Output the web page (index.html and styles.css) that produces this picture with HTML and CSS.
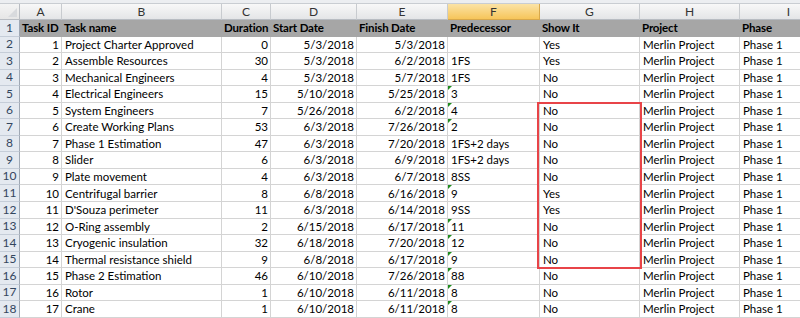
FILE: index.html
```html
<!DOCTYPE html>
<html>
<head>
<meta charset="utf-8">
<link rel="stylesheet" href="styles.css">
</head>
<body>
<div class="sheet">
  <div class="topline"></div>
  <div class="row colhdr">
    <div class="corner"><span class="corner-tri"></span></div>
    <div class="ch">A</div><div class="ch">B</div><div class="ch">C</div><div class="ch">D</div><div class="ch">E</div><div class="ch sel">F</div><div class="ch">G</div><div class="ch">H</div><div class="ch">I</div>
  </div>
  <div class="row head">
    <div class="rh">1</div>
    <div class="c">Task ID</div><div class="c">Task name</div><div class="c">Duration</div><div class="c">Start Date</div><div class="c">Finish Date</div><div class="c">Predecessor</div><div class="c">Show It</div><div class="c">Project</div><div class="c">Phase</div>
  </div>
  <div class="row"><div class="rh">2</div><div class="c r">1</div><div class="c">Project Charter Approved</div><div class="c r">0</div><div class="c r">5/3/2018</div><div class="c r">5/3/2018</div><div class="c"></div><div class="c">Yes</div><div class="c">Merlin Project</div><div class="c">Phase 1</div></div>
  <div class="row"><div class="rh">3</div><div class="c r">2</div><div class="c">Assemble Resources</div><div class="c r">30</div><div class="c r">5/3/2018</div><div class="c r">6/2/2018</div><div class="c">1FS</div><div class="c">Yes</div><div class="c">Merlin Project</div><div class="c">Phase 1</div></div>
  <div class="row"><div class="rh">4</div><div class="c r">3</div><div class="c">Mechanical Engineers</div><div class="c r">4</div><div class="c r">5/3/2018</div><div class="c r">5/7/2018</div><div class="c">1FS</div><div class="c">No</div><div class="c">Merlin Project</div><div class="c">Phase 1</div></div>
  <div class="row"><div class="rh">5</div><div class="c r">4</div><div class="c">Electrical Engineers</div><div class="c r">15</div><div class="c r">5/10/2018</div><div class="c r">5/25/2018</div><div class="c t">3</div><div class="c">No</div><div class="c">Merlin Project</div><div class="c">Phase 1</div></div>
  <div class="row"><div class="rh">6</div><div class="c r">5</div><div class="c">System Engineers</div><div class="c r">7</div><div class="c r">5/26/2018</div><div class="c r">6/2/2018</div><div class="c t">4</div><div class="c">No</div><div class="c">Merlin Project</div><div class="c">Phase 1</div></div>
  <div class="row"><div class="rh">7</div><div class="c r">6</div><div class="c">Create Working Plans</div><div class="c r">53</div><div class="c r">6/3/2018</div><div class="c r">7/26/2018</div><div class="c t">2</div><div class="c">No</div><div class="c">Merlin Project</div><div class="c">Phase 1</div></div>
  <div class="row"><div class="rh">8</div><div class="c r">7</div><div class="c">Phase 1 Estimation</div><div class="c r">47</div><div class="c r">6/3/2018</div><div class="c r">7/20/2018</div><div class="c">1FS+2 days</div><div class="c">No</div><div class="c">Merlin Project</div><div class="c">Phase 1</div></div>
  <div class="row"><div class="rh">9</div><div class="c r">8</div><div class="c">Slider</div><div class="c r">6</div><div class="c r">6/3/2018</div><div class="c r">6/9/2018</div><div class="c">1FS+2 days</div><div class="c">No</div><div class="c">Merlin Project</div><div class="c">Phase 1</div></div>
  <div class="row"><div class="rh">10</div><div class="c r">9</div><div class="c">Plate movement</div><div class="c r">4</div><div class="c r">6/3/2018</div><div class="c r">6/7/2018</div><div class="c">8SS</div><div class="c">No</div><div class="c">Merlin Project</div><div class="c">Phase 1</div></div>
  <div class="row"><div class="rh">11</div><div class="c r">10</div><div class="c">Centrifugal barrier</div><div class="c r">8</div><div class="c r">6/8/2018</div><div class="c r">6/16/2018</div><div class="c t">9</div><div class="c">Yes</div><div class="c">Merlin Project</div><div class="c">Phase 1</div></div>
  <div class="row"><div class="rh">12</div><div class="c r">11</div><div class="c">D'Souza perimeter</div><div class="c r">11</div><div class="c r">6/3/2018</div><div class="c r">6/14/2018</div><div class="c">9SS</div><div class="c">Yes</div><div class="c">Merlin Project</div><div class="c">Phase 1</div></div>
  <div class="row"><div class="rh">13</div><div class="c r">12</div><div class="c">O-Ring assembly</div><div class="c r">2</div><div class="c r">6/15/2018</div><div class="c r">6/17/2018</div><div class="c t">11</div><div class="c">No</div><div class="c">Merlin Project</div><div class="c">Phase 1</div></div>
  <div class="row"><div class="rh">14</div><div class="c r">13</div><div class="c">Cryogenic insulation</div><div class="c r">32</div><div class="c r">6/18/2018</div><div class="c r">7/20/2018</div><div class="c t">12</div><div class="c">No</div><div class="c">Merlin Project</div><div class="c">Phase 1</div></div>
  <div class="row"><div class="rh">15</div><div class="c r">14</div><div class="c">Thermal resistance shield</div><div class="c r">9</div><div class="c r">6/8/2018</div><div class="c r">6/17/2018</div><div class="c t">9</div><div class="c">No</div><div class="c">Merlin Project</div><div class="c">Phase 1</div></div>
  <div class="row"><div class="rh">16</div><div class="c r">15</div><div class="c">Phase 2 Estimation</div><div class="c r">46</div><div class="c r">6/10/2018</div><div class="c r">7/26/2018</div><div class="c t">88</div><div class="c">No</div><div class="c">Merlin Project</div><div class="c">Phase 1</div></div>
  <div class="row"><div class="rh">17</div><div class="c r">16</div><div class="c">Rotor</div><div class="c r">1</div><div class="c r">6/10/2018</div><div class="c r">6/11/2018</div><div class="c t">8</div><div class="c">No</div><div class="c">Merlin Project</div><div class="c">Phase 1</div></div>
  <div class="row"><div class="rh">18</div><div class="c r">17</div><div class="c">Crane</div><div class="c r">1</div><div class="c r">6/10/2018</div><div class="c r">6/11/2018</div><div class="c t">8</div><div class="c">No</div><div class="c">Merlin Project</div><div class="c">Phase 1</div></div>
  <div class="highlight"></div>
</div>
</body>
</html>
```
FILE: styles.css
```css
* { box-sizing: border-box; }
html, body { margin: 0; padding: 0; background: #fff; overflow: hidden; }
body { width: 800px; height: 318px; }
.sheet {
  position: relative;
  width: 840px;
  font-family: Lato, "Liberation Sans", sans-serif;
  font-size: 11.5px;
  color: #000;
}
.topline {
  height: 4px;
  background: #eceef1;
  border-bottom: 1px solid #c9cdd2;
}
.row {
  display: grid;
  grid-template-columns: 20px 42px 160px 49px 86px 91px 92px 100px 100px 98px;
  height: 16.56px;
}
.colhdr { height: 16px; }
.corner {
  position: relative;
  background: linear-gradient(#f4f4f4, #e6e6e6);
  border-right: 1px solid #b8bcc2;
  border-bottom: 1px solid #b8bcc2;
}
.corner-tri {
  position: absolute;
  right: 2px; bottom: 2px;
  width: 0; height: 0;
  border-left: 9px solid transparent;
  border-bottom: 9px solid #d8dadd;
}
.ch {
  display: flex;
  align-items: center;
  justify-content: center;
  background: linear-gradient(#f8f8f8, #e4e5e7);
  border-right: 1px solid #c8cbcf;
  border-bottom: 1px solid #b8bcc2;
  color: #333;
  font-size: 12px;
  line-height: 1;
}
.ch.sel {
  background: linear-gradient(#fbe3a6, #f6c55a);
  border-right-color: #d8a84a;
  border-bottom-color: #d8a84a;
}
.rh {
  display: flex;
  align-items: flex-end;
  justify-content: center;
  padding-bottom: 2px;
  background: #e4e9f0;
  border-right: 1px solid #9fa8b4;
  border-bottom: 1px solid #c5cdd8;
  color: #33465e;
  font-size: 12px;
  line-height: 1;
}
.c {
  position: relative;
  display: flex;
  align-items: flex-end;
  padding: 0 2px 2px 3px;
  border-right: 1px solid #d4d4d4;
  border-bottom: 1px solid #d4d4d4;
  white-space: nowrap;
  overflow: hidden;
  line-height: 1;
}
.c.r { justify-content: flex-end; }
.head .c {
  background: #a6a6a6;
  border-right-color: #a6a6a6;
  border-bottom-color: #a6a6a6;
  font-weight: bold;
  padding-left: 2px;
  padding-right: 0;
  letter-spacing: -0.15px;
}
.t::before {
  content: "";
  position: absolute;
  left: 0; top: 0;
  width: 0; height: 0;
  border-top: 4px solid #1e8c1e;
  border-right: 4px solid transparent;
}
.highlight {
  position: absolute;
  left: 537px;
  top: 102px;
  width: 105px;
  height: 167px;
  border: 2px solid #e84448;
  pointer-events: none;
}
```
